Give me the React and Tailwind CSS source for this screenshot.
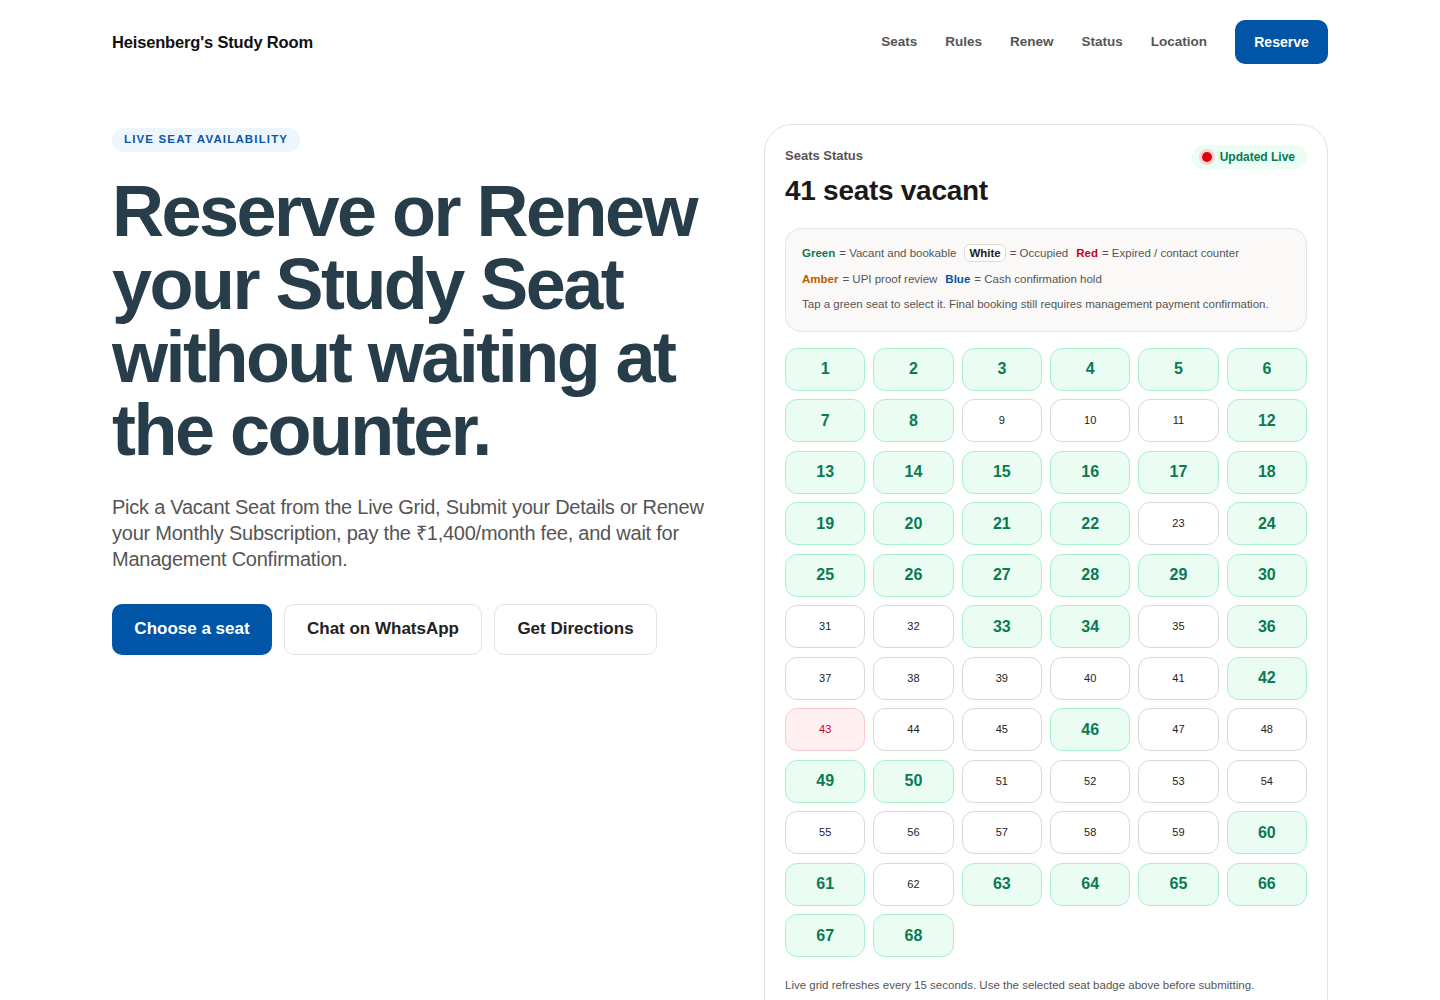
import React from "react";

const vacant = new Set([
  1, 2, 3, 4, 5, 6, 7, 8, 12, 13, 14, 15, 16, 17, 18, 19, 20, 21, 22, 24, 25, 26, 27, 28, 29, 30, 33, 34, 36, 42,
  46, 49, 50, 60, 61, 63, 64, 65, 66, 67, 68,
]);
const expired = new Set([43]);

const seats = Array.from({ length: 68 }, (_, i) => i + 1);

const Seat = ({ n }) => {
  if (vacant.has(n)) {
    return (
      <button className="h-[43px] rounded-xl border border-[#a8f0cc] bg-[#ebfdf3] text-[16px] font-bold text-[#0a7a55]">
        {n}
      </button>
    );
  }
  if (expired.has(n)) {
    return (
      <button className="h-[43px] rounded-xl border border-[#fccaca] bg-[#fff1f1] text-[11px] font-medium text-[#c8001e]">
        {n}
      </button>
    );
  }
  return (
    <button className="h-[43px] rounded-xl border border-[#d9d9d9] bg-white text-[11px] font-medium text-[#222]">
      {n}
    </button>
  );
};

const App = () => {
  return (
    <div className="min-h-screen bg-white font-['Liberation_Sans',Arial,sans-serif] text-[#111]">
      <div className="mx-auto w-[1216px]">
        {/* top bar */}
        <header className="flex items-center justify-between pt-5 pb-5">
          <div className="text-[16.5px] font-bold tracking-[-0.01em] text-[#111]">Heisenberg's Study Room</div>
          <nav className="flex items-center">
            <div className="flex items-center gap-[28px] text-[13.5px] font-bold text-[#555]">
              <a href="#">Seats</a>
              <a href="#">Rules</a>
              <a href="#">Renew</a>
              <a href="#">Status</a>
              <a href="#">Location</a>
            </div>
            <button className="ml-[28px] h-[44px] w-[93px] rounded-[10px] bg-[#0055a6] text-[14px] font-bold text-white">
              Reserve
            </button>
          </nav>
        </header>

        <main className="grid grid-cols-[1fr_564px] gap-[52px] pt-[42px]">
          <section>
            <span className="inline-flex h-[24px] items-center rounded-full bg-[#eef6fd] px-3 text-[11.5px] font-bold tracking-[0.1em] text-[#0a56a5]">
              LIVE SEAT AVAILABILITY
            </span>
            <h1 className="mt-[23px] text-[72px] leading-[73px] font-bold tracking-[-0.035em] text-[#273e4a]">
              Reserve or Renew your Study Seat without waiting at the counter.
            </h1>
            <p className="mt-[27px] text-[20px] leading-[26px] tracking-[-0.012em] text-[#555]">
              Pick a Vacant Seat from the Live Grid, Submit your Details or Renew your Monthly Subscription, pay the
              ₹1,400/month fee, and wait for Management Confirmation.
            </p>
            <div className="mt-[32px] flex gap-3">
              <button className="h-[51px] w-[160px] rounded-[10px] bg-[#0055a6] text-[17px] font-bold text-white">
                Choose a seat
              </button>
              <button className="h-[51px] w-[198px] rounded-[10px] border border-[#e3e3e3] bg-white text-[17px] font-bold text-[#222]">
                Chat on WhatsApp
              </button>
              <button className="h-[51px] w-[163px] rounded-[10px] border border-[#e3e3e3] bg-white text-[17px] font-bold text-[#222]">
                Get Directions
              </button>
            </div>
          </section>

          <section className="-mt-[2px] rounded-[28px] border border-[#e2e2e2] bg-white px-5 pt-[21px] pb-8">
            <div className="flex items-start justify-between">
              <div>
                <div className="text-[13px] font-bold text-[#555]">Seats Status</div>
                <div className="mt-[9px] text-[28px] leading-[32px] font-bold tracking-[-0.01em] text-[#1a1a1a]">
                  41 seats vacant
                </div>
              </div>
              <div className="mt-[-1px] flex h-[24px] items-center gap-[8px] rounded-full bg-[#ecfdf4] pr-[12px] pl-[10px] text-[12px] font-bold text-[#0a7a55]">
                <span className="h-[10px] w-[10px] rounded-full bg-[#e5000f] ring-[3px] ring-[#f6d6d6]"></span>
                Updated Live
              </div>
            </div>

            {/* colour legend */}
            <div className="mt-[21px] rounded-2xl border border-[#e4e4e4] bg-[#faf9f8] px-4 pt-[15px] pb-[18px] text-[11.5px] leading-[18px] text-[#555]">
              <div className="flex items-center">
                <span className="font-bold text-[#0a7a55]">Green</span>
                <span className="ml-1">= Vacant and bookable</span>
                <span className="ml-[8px] rounded-md border border-[#dcdcdc] bg-white px-[4px] leading-[16px] font-bold text-[#222]">
                  White
                </span>
                <span className="ml-1">= Occupied</span>
                <span className="ml-[8px] font-bold text-[#c8001e]">Red</span>
                <span className="ml-1">= Expired / contact counter</span>
              </div>
              <div className="mt-[8px] flex items-center">
                <span className="font-bold text-[#c25a00]">Amber</span>
                <span className="ml-1">= UPI proof review</span>
                <span className="ml-[8px] font-bold text-[#0a4fa0]">Blue</span>
                <span className="ml-1">= Cash confirmation hold</span>
              </div>
              <div className="mt-[7px]">
                Tap a green seat to select it. Final booking still requires management payment confirmation.
              </div>
            </div>

            <div className="mt-[16px] grid grid-cols-6 gap-x-2 gap-y-[8.5px]">
              {seats.map((n) => (
                <Seat key={n} n={n} />
              ))}
            </div>

            <p className="mt-[20px] text-[11.5px] text-[#555]">
              Live grid refreshes every 15 seconds. Use the selected seat badge above before submitting.
            </p>
          </section>
        </main>
      </div>
    </div>
  );
};

export default App;
